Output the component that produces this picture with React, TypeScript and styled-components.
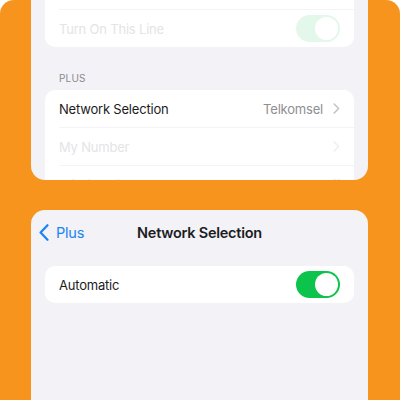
import styled, { createGlobalStyle } from "styled-components";

const GlobalStyle = createGlobalStyle`
  html, body {
    margin: 0;
    padding: 0;
    background: #ffffff;
  }
  body {
    font-family: Inter, "Liberation Sans", sans-serif;
    -webkit-font-smoothing: antialiased;
  }
`;

const Stage = styled.div`
  width: 400px;
  height: 400px;
  background: #f7941e;
  border-radius: 14px 14px 0 0;
  padding: 0 32px 0 31px;
  box-sizing: border-box;
  display: flex;
  flex-direction: column;
  gap: 30px;
  overflow: hidden;
`;

const Screen = styled.div<{ $top?: boolean }>`
  background: #f2f2f7;
  border-radius: ${(p) => (p.$top ? "0 0 14px 14px" : "14px 14px 0 0")};
  height: ${(p) => (p.$top ? "180px" : "auto")};
  flex: ${(p) => (p.$top ? "0 0 auto" : "1")};
  overflow: hidden;
  padding: 0 14px;
  display: flex;
  flex-direction: column;
`;

const Scroller = styled.div`
  margin-top: -28px;
  display: flex;
  flex-direction: column;
`;

const Group = styled.div`
  background: #ffffff;
  border-radius: 10px;
  overflow: hidden;
`;

const Row = styled.div`
  height: 37px;
  padding: 0 14px;
  display: flex;
  align-items: center;
  justify-content: space-between;
  & + & {
    border-top: 1px solid #f4f4f6;
    margin-left: 14px;
    padding-left: 0;
  }
`;

const Label = styled.span<{ $faded?: boolean }>`
  font-size: 13px;
  letter-spacing: -0.2px;
  color: ${(p) => (p.$faded ? "#e4e4e6" : "#1c1c1e")};
`;

const Detail = styled.span<{ $faded?: boolean }>`
  display: flex;
  align-items: center;
  gap: 10px;
  font-size: 13px;
  letter-spacing: -0.2px;
  color: ${(p) => (p.$faded ? "#ececee" : "#8e8e93")};
`;

const Header = styled.div`
  padding: 25px 14px 6px;
  font-size: 10px;
  letter-spacing: 0.2px;
  color: #8a8a8e;
`;

const Toggle = styled.div<{ $faded?: boolean }>`
  width: 44px;
  height: 27px;
  border-radius: 14px;
  background: ${(p) => (p.$faded ? "#e4f7eb" : "#0cc44c")};
  display: flex;
  align-items: center;
  justify-content: flex-end;
  padding: 2px;
  box-sizing: border-box;
`;

const Knob = styled.div`
  width: 23px;
  height: 23px;
  border-radius: 50%;
  background: #ffffff;
`;

const NavBar = styled.div`
  height: 44px;
  margin: 0 -6px 12px;
  display: grid;
  grid-template-columns: 1fr auto 1fr;
  align-items: center;
`;

const Back = styled.div`
  display: flex;
  align-items: center;
  gap: 7px;
  color: #1a84f5;
  font-size: 14.5px;
  letter-spacing: -0.2px;
`;

const Title = styled.div`
  font-size: 14.5px;
  font-weight: 600;
  color: #1c1c1e;
  letter-spacing: -0.25px;
`;

const Chevron = ({ color }: { color: string }) => (
  <svg width="7" height="11" viewBox="0 0 7 11">
    <path d="M1.2 1 L5.6 5.5 L1.2 10" fill="none" stroke={color} strokeWidth="1.6" strokeLinecap="round" strokeLinejoin="round" />
  </svg>
);

const BackChevron = () => (
  <svg width="10" height="17" viewBox="0 0 10 17">
    <path d="M8.5 1.2 L1.6 8.5 L8.5 15.8" fill="none" stroke="#1a84f5" strokeWidth="2.2" strokeLinecap="round" strokeLinejoin="round" />
  </svg>
);

export default function App() {
  return (
    <>
      <GlobalStyle />
      <Stage>
        <Screen $top>
          <Scroller>
            <Group>
              <Row />
              <Row>
                <Label $faded>Turn On This Line</Label>
                <Toggle $faded>
                  <Knob />
                </Toggle>
              </Row>
            </Group>
            <Header>PLUS</Header>
            <Group>
              <Row>
                <Label>Network Selection</Label>
                <Detail>
                  Telkomsel
                  <Chevron color="#c4c4c7" />
                </Detail>
              </Row>
              <Row>
                <Label $faded>My Number</Label>
                <Chevron color="#efeff1" />
              </Row>
              <Row>
                <Label $faded>Wi-Fi Calling</Label>
                <Detail $faded>Off</Detail>
              </Row>
            </Group>
          </Scroller>
        </Screen>
        <Screen>
          <NavBar>
            <Back>
              <BackChevron />
              Plus
            </Back>
            <Title>Network Selection</Title>
            <span />
          </NavBar>
          <Group>
            <Row>
              <Label>Automatic</Label>
              <Toggle>
                <Knob />
              </Toggle>
            </Row>
          </Group>
        </Screen>
      </Stage>
    </>
  );
}
